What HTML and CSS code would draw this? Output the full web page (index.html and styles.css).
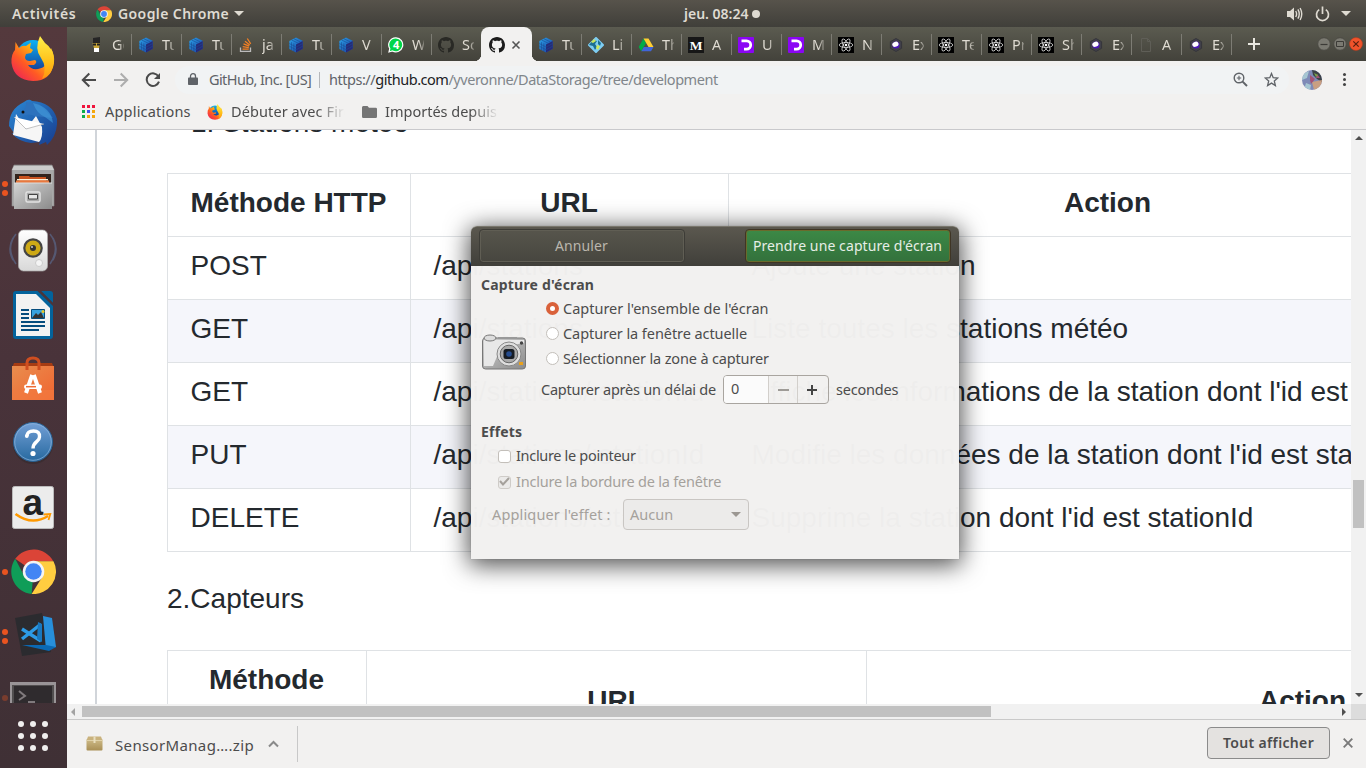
FILE: index.html
```html
<!DOCTYPE html>
<html lang="fr">
<head>
<meta charset="utf-8">
<title>Bureau</title>
<link rel="stylesheet" href="styles.css">
</head>
<body>
<svg class="defs" width="0" height="0">
  <defs>
    <linearGradient id="g-cube" x1="0" y1="0" x2="1" y2="1"><stop offset="0" stop-color="#2ba4e8"/><stop offset="1" stop-color="#173ba0"/></linearGradient>
    <linearGradient id="g-fox" x1="1" y1="0" x2="0" y2="1"><stop offset="0" stop-color="#ffe226"/><stop offset=".35" stop-color="#ffb011"/><stop offset=".62" stop-color="#ff5a24"/><stop offset="1" stop-color="#e91466"/></linearGradient>
    <linearGradient id="g-foxy" x1="0" y1="0" x2="0" y2="1"><stop offset="0" stop-color="#fff04a"/><stop offset=".6" stop-color="#ffc01a"/><stop offset="1" stop-color="#ff9410"/></linearGradient>
    <linearGradient id="g-globe" x1="0" y1="0" x2="0" y2="1"><stop offset="0" stop-color="#0bb2f4"/><stop offset="1" stop-color="#17338f"/></linearGradient>
    <linearGradient id="g-bird" x1="0" y1="0" x2="1" y2="1"><stop offset="0" stop-color="#2c8ad6"/><stop offset="1" stop-color="#173c8e"/></linearGradient>
    <linearGradient id="g-steel" x1="0" y1="0" x2="1" y2="1"><stop offset="0" stop-color="#d2d2d2"/><stop offset="1" stop-color="#8b8b8b"/></linearGradient>
    <linearGradient id="g-white" x1="0" y1="0" x2="0" y2="1"><stop offset="0" stop-color="#fff"/><stop offset="1" stop-color="#d8d8d8"/></linearGradient>
    <linearGradient id="g-bag" x1="0" y1="0" x2="1" y2="1"><stop offset="0" stop-color="#e98d4e"/><stop offset="1" stop-color="#f06530"/></linearGradient>
    <linearGradient id="g-help" x1="0" y1="0" x2="0" y2="1"><stop offset="0" stop-color="#739fd6"/><stop offset="1" stop-color="#26699f"/></linearGradient>
    <linearGradient id="g-box" x1="0" y1="0" x2="0" y2="1"><stop offset="0" stop-color="#cfbc8a"/><stop offset="1" stop-color="#a98f55"/></linearGradient>
  </defs>
  <symbol id="chrome" viewBox="0 0 48 48">
    <path fill="#db4437" d="M24 24 4.500 10.500A24 24 0 0 1 45 13H24Z"/>
    <path fill="#0f9d58" d="M24 24 22 48A24 24 0 0 1 4.500 10.500L14.500 29.500Z"/>
    <path fill="#ffcd40" d="M24 24V13H45.300A24 24 0 0 1 22 48L33.500 29.500Z"/>
    <circle cx="24" cy="24" r="11.500" fill="#f4f4f4"/><circle cx="24" cy="24" r="8.800" fill="#4285f4"/>
  </symbol>
  <symbol id="firefox" viewBox="0 0 44 46">
    <circle cx="22" cy="21" r="17" fill="url(#g-globe)"/>
    <path fill="url(#g-fox)" d="M4.500 6 8 12Q11 9 15 10L20 6.500 19 12 22 14 20 17 15 18 14 21Q14 25 19 25L24 24Q27 26 23 29L17 29Q20 34 27 33Q38 31 37 19L40 12Q44 20 43 27Q40 45 22 45Q3 44 .5 27Q0 18 4 14Z"/>
    <path fill="url(#g-foxy)" d="M29 0 34 7Q43 13 43 25Q42 39 31 43Q37 32 30 22Q23 13 29 0Z"/>
  </symbol>
  <symbol id="cube" viewBox="0 0 16 16">
    <path fill="url(#g-cube)" d="M8 .5 14.700 3.800V11.800L8 15.500 1.300 12V4Z"/>
    <path fill="#262a78" d="M8 7.500 14.700 4V11.800L8 15.500Z"/>
    <path fill="none" stroke="#1a4b94" stroke-width=".6" d="M1.300 6.500 8 10 14.700 6.500M1.300 9.200 8 12.700 14.700 9.200M3.500 5.200V13M5.800 6.400V14.200M3.500 2.900 10.300 6.300M5.800 1.700 12.500 5"/>
  </symbol>
  <symbol id="so" viewBox="0 0 16 16"><path fill="none" stroke="#bcbbbb" stroke-width="1.300" d="M2.500 10.500V14.400H12.500V10.500"/><path stroke="#f48024" stroke-width="1.300" d="M4.500 12.200H10.700M4.700 9.700 10.800 10.600M5.500 6.900 11.200 9.200M7 4.200 11.700 8M9.300 1.500 12.700 6.800"/></symbol>
  <symbol id="octocat" viewBox="0 0 16 16"><path d="M8 0C3.580 0 0 3.580 0 8c0 3.540 2.290 6.530 5.470 7.590.4.070.55-.17.55-.38 0-.19-.01-.82-.01-1.490-2.010.37-2.530-.49-2.690-.94-.09-.23-.48-.94-.82-1.130-.28-.15-.68-.52-.01-.53.63-.01 1.080.58 1.230.82.72 1.210 1.870.87 2.330.66.07-.52.28-.87.51-1.070-1.780-.2-3.640-.89-3.640-3.950 0-.87.31-1.590.82-2.150-.08-.2-.36-1.020.08-2.120 0 0 .67-.21 2.200.82.64-.18 1.320-.27 2-.27s1.360.09 2 .27c1.530-1.040 2.200-.82 2.200-.82.44 1.100.16 1.920.08 2.120.51.56.82 1.270.82 2.150 0 3.070-1.870 3.750-3.650 3.950.29.25.54.73.54 1.480 0 1.070-.01 1.930-.01 2.200 0 .21.15.46.55.38A8.010 8.010 0 0 0 16 8c0-4.420-3.580-8-8-8Z"/></symbol>
  <symbol id="react" viewBox="0 0 16 16"><path fill="#000" d="M0 0H16V16H0Z"/><g fill="none" stroke="#ddd" stroke-width=".8"><ellipse cx="8" cy="8" rx="6.800" ry="2.500"/><ellipse cx="8" cy="8" rx="6.800" ry="2.500" transform="rotate(60 8 8)"/><ellipse cx="8" cy="8" rx="6.800" ry="2.500" transform="rotate(120 8 8)"/></g><circle cx="8" cy="8" r="1.300" fill="#fff"/></symbol>
  <symbol id="expo" viewBox="0 0 16 16"><path fill="#41404a" stroke="#35353b" d="M8 1.500 13.600 4.700V11.300L8 14.500 2.400 11.300V4.700Z"/><circle cx="8" cy="8" r="3.600" fill="#4b16b8"/><ellipse cx="7.700" cy="7.100" rx="3.200" ry="2.500" fill="#fff" transform="rotate(-20 8 8)"/></symbol>
  <symbol id="dlogo" viewBox="0 0 16 16"><rect width="16" height="16" rx="1" fill="#8a05f4"/><path fill="none" stroke="#fff" stroke-width="2.800" d="M3.500 3.800H8.500A4 4 0 0 1 8.500 12.200H6"/></symbol>
</svg>

<div class="desktop">
  <header class="topbar">
    <span class="activities">Activités</span>
    <span class="appmenu"><svg width="16" height="16"><use href="#chrome"/></svg><span class="appname">Google Chrome</span><i class="caret"></i></span>
    <span class="clock">jeu. 08:24<i class="dot"></i></span>
    <span class="tray">
      <svg width="17" height="16" viewBox="0 0 17 16"><path fill="#dfdbd2" d="M1 5H4L8 1.500V14.500L4 11H1Z"/><g fill="none" stroke="#dfdbd2" stroke-width="1.400"><path d="M9.700 5Q11.500 8 9.700 11M11.900 3.300Q14.600 8 11.900 12.700M14.100 2Q17.400 8 14.100 14"/></g></svg>
      <svg class="power" width="15" height="16" viewBox="0 0 15 16"><path fill="none" stroke="#dfdbd2" stroke-width="1.700" d="M4.200 3.600A6 6 0 1 0 10.800 3.600M7.500 .5V8"/></svg>
      <i class="caret"></i>
    </span>
  </header>

  <div class="workspace">
    <nav class="dock">
      <div class="slot"><svg width="44" height="46"><use href="#firefox"/></svg></div>
      <div class="slot"><svg width="48" height="48" viewBox="0 0 48 48"><path fill="url(#g-bird)" d="M15 3Q20-1 23 2Q43 3 48 20Q49 36 38 46L37 43 30 46 31 43 22 44Q8 42 3 34L5 34 0 27Q0 10 15 3Z"/><path fill="#f6f6f6" d="M7 15 4 36 30 43Q34 39 33 28L27 17 17 30Z"/><path fill="#fff" stroke="#aaa" stroke-width=".7" d="M5 18 17 30 35 25"/><path fill="#2d72bd" d="M12 16Q18 9 17 3L30 5 44 19 26 17Q18 13 10 19Z"/><path fill="#439cdc" opacity=".6" d="M24 4Q42 8 44 24L36 18Q28 15 24 4Z"/><circle cx="14" cy="13" r="1.500" fill="#111"/></svg></div>
      <div class="slot"><i class="run two"></i><svg width="44" height="46" viewBox="0 0 44 46"><path fill="#a8a8a8" stroke="#8d8d8d" stroke-width=".6" d="M3 1H41L43 6V42H1V6Z"/><path fill="#cbcbcb" d="M3 2H41L43 6H1Z"/><path fill="#33241d" d="M4 10H40V20H4Z"/><path fill="#c9531f" d="M8 12H18L19 13H35V19H8Z"/><path fill="#fff2d8" d="M6 15H37V16.500H6Z"/><path fill="#e8783e" d="M5 16.500H38V19H5Z"/><path fill="url(#g-steel)" d="M3 19H41V45H3Z"/><path stroke="#ddd" d="M3 19H41"/><rect x="15" y="28" width="14" height="10" rx="1.500" fill="#aaa" stroke="#e2e2e2" stroke-width="1.500"/><path fill="#e7e7e7" stroke="#444" d="M17.500 30.500H26.500V35H17.500Z"/></svg></div>
      <div class="slot"><svg width="48" height="46" viewBox="0 0 48 46"><g fill="none" stroke="#5b6c91" stroke-width="1.600" opacity=".65"><path d="M7 6Q-4 20 7 36M41 6Q52 20 41 36M4 10Q-2 21 4 32M44 10Q50 21 44 32"/></g><rect x="9.500" y="2" width="29" height="41" rx="5" fill="url(#g-white)" stroke="#aaa" stroke-width=".7"/><circle cx="24" cy="20" r="9.800" fill="#444"/><circle cx="24" cy="20" r="7.600" fill="#cda916"/><circle cx="24" cy="20" r="3" fill="#333"/><circle cx="23" cy="19" r="1" fill="#ccc"/><circle cx="30" cy="35" r="3.500" fill="#f4f4f4" stroke="#ccc"/></svg></div>
      <div class="slot"><svg width="40" height="48" viewBox="0 0 40 48"><path fill="#03639c" d="M3 0H26L40 14V45Q40 48 37 48H3Q0 48 0 45V3Q0 0 3 0Z"/><path fill="#03639c" d="M28 0H37Q40 0 40 3V12Z"/><path fill="#4b343a" d="M24.500 0H28L40 12V15Z"/><path fill="#f2f2f2" d="M3 3H23L37 17V45H3Z"/><path stroke="#054c7d" stroke-width="2" d="M8 19H16M8 23H16M8 27H16M8 31H32M8 35H32M8 39H26"/><path fill="#37a2df" stroke="#054c7d" d="M18.500 18.500H31.500V27.500H18.500Z"/><path fill="#333" d="M19 27 23 22 25 24 28 21 31 27Z"/><circle cx="30" cy="20.500" r="1.500" fill="#e9c826"/></svg></div>
      <div class="slot"><svg width="42" height="46" viewBox="0 0 42 46"><path fill="#a63c13" d="M2 7H40L42 12H0Z"/><path fill="url(#g-bag)" d="M0 10H42V44H0Z"/><path fill="#f47b41" opacity=".6" d="M0 34H42V44H0Z"/><path fill="none" stroke="#cf4e20" stroke-width="3" d="M15 14V7Q15 2 21 2T27 7V14"/><path fill="none" stroke="#fff" stroke-width="4" d="M14 37 20.200 19M21.800 19 28 37"/><rect x="12" y="28.500" width="18" height="4.400" rx="2.200" fill="#fff"/><path stroke="#ef6b33" stroke-width="1.500" d="M14 30.700H24"/></svg></div>
      <div class="slot"><svg width="42" height="44" viewBox="0 0 42 44"><circle cx="21" cy="23" r="20" fill="#2b2529" opacity=".4"/><circle cx="21" cy="21" r="19.500" fill="url(#g-help)" stroke="#2a6192"/><circle cx="21" cy="21" r="18.300" fill="none" stroke="#8fb4dc" stroke-width=".7"/><path fill="none" stroke="#fff" stroke-width="3.400" d="M15 15Q15 10 21.500 10T27.500 16C27.500 21 21 20.500 21 27.500"/><circle cx="14.800" cy="15" r="1.900" fill="#fff"/><circle cx="21" cy="32.500" r="2.600" fill="#fff"/></svg></div>
      <div class="slot"><svg width="42" height="43" viewBox="0 0 42 43"><rect x=".5" y=".5" width="41" height="42" rx="2" fill="#ececec" stroke="#bbb"/><text x="10.500" y="28.500" class="amazon">a</text><path fill="none" stroke="#ff9900" stroke-width="2.600" d="M3.500 28Q20 40 36 30"/><path fill="none" stroke="#ff9900" stroke-width="1.800" d="M31.500 28.500 38.300 28 36.500 34"/></svg></div>
      <div class="slot"><i class="run"></i><svg width="45" height="45"><use href="#chrome"/></svg></div>
      <div class="slot"><i class="run two"></i><svg class="code" width="42" height="46" viewBox="0 0 42 46"><path fill="#2b2b2f" d="M0 6 27 1 36 40 7 44Z"/><path fill="#278fdb" d="M28 4 37 6 41 35 31 38Z"/><path fill="#0b69b4" d="M7 33 31 33 41 35 34 39Z"/><path fill="none" stroke="#2d9be6" stroke-width="3.400" d="M7 17 26 29M7 27 26 12"/><path fill="#1978bf" d="M23 10 27 12V30L22 27Z"/></svg></div>
      <div class="slot last"><i class="run dim"></i><svg width="46" height="21" viewBox="0 0 46 21"><path fill="#a9a6a8" d="M0 0H46V21H0Z"/><path fill="#555" d="M2 3H44V21H2Z"/><path fill="#2d2b2d" d="M4 4H42V21H4Z"/><path fill="none" stroke="#8b878a" stroke-width="2" d="M9 9 15 14 9 18M18 20H25"/></svg></div>
      <div class="apps"><i></i><i></i><i></i><i></i><i></i><i></i><i></i><i></i><i></i></div>
    </nav>

    <main class="browser">
      <div class="tabs">
        <div class="tab"><svg viewBox="0 0 16 16"><path fill="#252525" d="M5 1 12 0V6H5Z"/><path fill="#c9a637" d="M4.500 6H12L11 11H6Z"/><path fill="#222" d="M5 6.500H8V8.500H5ZM9 6.500H12V8.500H9Z"/><path fill="#fff" d="M6 11H11V15H6Z"/></svg><b>Go</b></div>
        <div class="tab"><svg><use href="#cube"/></svg><b>Tu</b></div>
        <div class="tab"><svg><use href="#cube"/></svg><b>Tu</b></div>
        <div class="tab"><svg><use href="#so"/></svg><b>ja</b></div>
        <div class="tab"><svg><use href="#cube"/></svg><b>Tu</b></div>
        <div class="tab"><svg><use href="#cube"/></svg><b>V</b></div>
        <div class="tab"><svg viewBox="0 0 16 16"><path fill="#00d649" stroke="#fff" stroke-width="1.200" d="M8 .8A7 7 0 1 1 4.500 14L1 15 1.800 11.500A7 7 0 0 1 8 .8Z"/><text x="4.900" y="12" class="badge">4</text></svg><b>W</b></div>
        <div class="tab"><svg class="dark"><use href="#octocat"/></svg><b>Sc</b></div>
        <div class="tab active"><svg class="ink"><use href="#octocat"/></svg><svg class="x" viewBox="0 0 10 10"><path d="M1.500 1.500 8.500 8.500M8.500 1.500 1.500 8.500"/></svg></div>
        <div class="tab"><svg><use href="#cube"/></svg><b>Tu</b></div>
        <div class="tab"><svg viewBox="0 0 16 16"><path fill="#7ecdf2" stroke="#7ecdf2" stroke-width="2" stroke-linejoin="round" d="M8 1 15 8 8 15 1 8Z"/><path fill="#1c6f92" d="M5 3 9 4 7 7 9 10 7 13 5 9 1 8ZM10 3 13 6 12 9 10 7Z"/><path fill="#cde85e" d="M6 2 8 4 5 6 3 5ZM9 8 12 9 10 13 8 11Z"/></svg><b>Li</b></div>
        <div class="tab"><svg viewBox="0 0 16 16"><path fill="#00ac47" d="M5.500 1.500 8 6 3.300 14.300.7 10Z"/><path fill="#ffcf33" d="M5.500 1.500H10.500L15.500 10H10.500Z"/><path fill="#4065d9" d="M5.800 10H15.500L13 14.300H3.300Z"/></svg><b>Th</b></div>
        <div class="tab"><svg viewBox="0 0 16 16"><path fill="#171717" d="M0 0H16V16H0Z"/><text x="1.800" y="12.800" class="medium">M</text></svg><b>A</b></div>
        <div class="tab"><svg><use href="#dlogo"/></svg><b>U</b></div>
        <div class="tab"><svg><use href="#dlogo"/></svg><b>M</b></div>
        <div class="tab"><svg><use href="#react"/></svg><b>N</b></div>
        <div class="tab"><svg><use href="#expo"/></svg><b>Ex</b></div>
        <div class="tab"><svg><use href="#react"/></svg><b>Te</b></div>
        <div class="tab"><svg><use href="#react"/></svg><b>Pr</b></div>
        <div class="tab"><svg><use href="#react"/></svg><b>Sh</b></div>
        <div class="tab"><svg><use href="#expo"/></svg><b>Ex</b></div>
        <div class="tab"><svg viewBox="0 0 16 16"><path fill="none" stroke="#5f5e57" d="M3.500 1.500H9.500L12.500 4.500V14.500H3.500ZM9.500 1.500V4.500H12.500"/></svg><b>A</b></div>
        <div class="tab"><svg><use href="#expo"/></svg><b>Ex</b></div>
        <svg class="plus" width="12" height="12" viewBox="0 0 12 12"><path stroke="#e9e7e0" stroke-width="2" d="M6 0V12M0 6H12"/></svg>
        <div class="winbtns">
          <svg viewBox="0 0 14 14"><circle cx="7" cy="7" r="6.300" fill="#7b7a72" stroke="#4b4a43"/><path stroke="#3c3b37" stroke-width="1.200" d="M3.500 7.500H10.500"/></svg>
          <svg viewBox="0 0 14 14"><circle cx="7" cy="7" r="6.300" fill="#7b7a72" stroke="#4b4a43"/><path fill="none" stroke="#3c3b37" d="M3.500 4.500H10.500V9.500H3.500Z"/></svg>
          <svg viewBox="0 0 14 14"><circle cx="7" cy="7" r="6.500" fill="#f0532b" stroke="#b63b1c" stroke-width=".5"/><path stroke="#59200f" stroke-width="1.200" d="M4.300 4.300 9.700 9.700M9.700 4.300 4.300 9.700"/></svg>
        </div>
      </div>

      <div class="toolbar">
        <svg class="back" width="16" height="16" viewBox="0 0 16 16"><path d="M15 8H2M8.300 1.500 1.800 8 8.300 14.500"/></svg>
        <svg class="fwd" width="16" height="16" viewBox="0 0 16 16"><path d="M1 8H14M7.700 1.500 14.200 8 7.700 14.500"/></svg>
        <svg class="reload" width="16" height="16" viewBox="0 0 16 16"><path d="M13.500 4.500A6.300 6.300 0 1 0 14 9.700"/><path fill="#4a4a4a" stroke="none" d="M15 1V7H9Z"/></svg>
        <div class="omnibox">
          <svg class="lock" width="10" height="13" viewBox="0 0 10 13"><path fill="#5f6368" d="M.8 4.500H9.200Q10 4.500 10 5.300V11Q10 12 9.200 12H.8Q0 12 0 11V5.300Q0 4.500.8 4.500Z"/><path fill="none" stroke="#5f6368" stroke-width="1.300" d="M2.500 5V3.200A2.500 2.500 0 0 1 7.500 3.200V5"/></svg>
          <span class="org">GitHub, Inc. [US]</span><i class="bar"></i>
          <span class="url"><span class="scheme">https://</span><span class="host">github.com</span><span class="path">/yveronne/DataStorage/tree/development</span></span>
          <svg class="mag" width="15" height="15" viewBox="0 0 15 15"><g fill="none" stroke="#5f6368" stroke-width="1.400"><circle cx="6" cy="6" r="4.800"/><path d="M9.600 9.600 14 14" stroke-width="2"/><path d="M6 3.800V8.200M3.800 6H8.200" stroke-width="1.100"/></g></svg>
          <svg class="star" width="15" height="15" viewBox="0 0 15 15"><path fill="none" stroke="#5f6368" stroke-width="1.300" d="M7.500 1.500 9.200 5.700 13.800 6 10.300 9 11.400 13.500 7.500 11.100 3.600 13.500 4.700 9 1.200 6 5.800 5.700Z"/></svg>
        </div>
        <svg class="avatar" width="20" height="20" viewBox="0 0 20 20"><clipPath id="av"><circle cx="10" cy="10" r="10"/></clipPath><g clip-path="url(#av)"><path fill="#7f8ab7" d="M0 0H20V20H0Z"/><path fill="#3c4248" d="M10 0H20V12L15 9 11 5Z"/><path fill="#c99f82" d="M10 12 20 10V20H12Z"/><path fill="#a6c6d2" d="M0 4 7 1 5 8 0 10ZM4 13 9 15 8 20H2Z"/><path fill="#a35276" d="M8 5 13 9 9 14 8 10ZM15 4 18 8 14 8Z"/><path fill="#7ba748" d="M12 3 16 5 14 7Z"/></g></svg>
        <i class="kebab"></i>
      </div>

      <div class="bookmarks">
        <svg class="grid" width="14" height="14" viewBox="0 0 14 14"><path fill="#f0143c" d="M0 0H3V3H0ZM5 0H8V3H5ZM10 0H13V3H10Z"/><path fill="#0cad4b" d="M0 5H3V8H0ZM0 10H3V13H0Z"/><path fill="#3f51f0" d="M5 5H8V8H5Z"/><path fill="#f4a70b" d="M10 5H13V8H10ZM5 10H8V13H5ZM10 10H13V13H10Z"/></svg>
        <span class="bm apps-label">Applications</span>
        <svg class="ff" width="16" height="16"><use href="#firefox"/></svg>
        <span class="bm fade debut">Débuter avec Firefox</span>
        <svg class="folder" width="15" height="12" viewBox="0 0 15 12"><path fill="#757575" d="M1.300 0H5.500L7 1.700H13.700Q15 1.700 15 3V10.500Q15 12 13.700 12H1.300Q0 12 0 10.500V1.500Q0 0 1.300 0Z"/></svg>
        <span class="bm fade import">Importés depuis Firefox</span>
      </div>

      <div class="view">
        <div class="page">
          <p class="item">1. Stations météo</p>
          <table class="api first">
            <colgroup><col class="a1"><col class="a2"><col class="a3"></colgroup>
            <tr><th>Méthode HTTP</th><th>URL</th><th>Action</th></tr>
            <tr><td>POST</td><td>/api/stations</td><td>Ajoute une station</td></tr>
            <tr><td>GET</td><td>/api/stations</td><td>Liste toutes les stations météo</td></tr>
            <tr><td>GET</td><td>/api/stations/:stationId</td><td>Affiche les informations de la station dont l'id est stationId</td></tr>
            <tr><td>PUT</td><td>/api/stations/:stationId</td><td>Modifie les données de la station dont l'id est stationId</td></tr>
            <tr><td>DELETE</td><td>/api/stations/:stationId</td><td>Supprime la station dont l'id est stationId</td></tr>
          </table>
          <p class="next">2.Capteurs</p>
          <table class="api second">
            <colgroup><col class="b1"><col class="b2"><col class="b3"></colgroup>
            <tr><th>Méthode HTTP</th><th>URL</th><th>Action</th></tr>
          </table>
        </div>
        <div class="vscroll"><i class="up"></i><i class="thumb"></i><i class="down"></i></div>
        <div class="hscroll"><i class="left"></i><i class="thumb"></i><i class="right"></i></div>
        <div class="corner"></div>
      </div>

      <footer class="downloads">
        <svg class="zip" width="17" height="15" viewBox="0 0 17 15"><rect x=".5" y="3" width="16" height="11.500" rx="1" fill="url(#g-box)"/><path fill="#c9b27d" d="M2 .5H15L16.500 4.500H.5Z"/><path fill="#e9dfc0" d="M7.500 .5H9.500V7H7.500Z"/><path stroke="#eadfbc" stroke-width=".7" d="M.5 4.500H16.500"/></svg>
        <span class="fname">SensorManag….zip</span>
        <svg class="chev" width="11" height="8" viewBox="0 0 11 8"><path fill="none" stroke="#8a8a8a" stroke-width="2" d="M1 6.500 5.500 2 10 6.500"/></svg>
        <i class="rule"></i>
        <button class="showall">Tout afficher</button>
        <svg class="close" width="10" height="10" viewBox="0 0 10 10"><path stroke="#7a7a7a" stroke-width="1.900" d="M.7.7 9.300 9.300M9.300.7.7 9.300"/></svg>
      </footer>
    </main>
  </div>
</div>

<section class="dialog">
  <header class="dhead"><button class="cancel">Annuler</button><button class="take">Prendre une capture d'écran</button></header>
  <div class="dbody">
    <h2 class="cap">Capture d'écran</h2>
    <div class="capture">
      <svg class="camera" width="46" height="36" viewBox="0 0 46 36"><rect x="1.500" y="4" width="43" height="31" rx="3" fill="url(#g-steel)" stroke="#777"/><path fill="#e8e8e8" d="M3 6H43V9L20 13 12 32H3Z"/><ellipse cx="9" cy="4" rx="6" ry="3" fill="#ddd" stroke="#777"/><path fill="#999" d="M17 3H36V5H17Z"/><circle cx="28" cy="20" r="12" fill="#dedede" stroke="#888"/><circle cx="28" cy="20" r="8.800" fill="#aaa" stroke="#666"/><rect x="22.500" y="15" width="11" height="10" rx="2.500" fill="#171c23"/><circle cx="28" cy="20" r="2.800" fill="#254c8f"/><circle cx="40.500" cy="9" r="1.700" fill="#444"/><path fill="#e9a11b" d="M38 28H42V31H38Z"/></svg>
      <div class="radios">
        <label><i class="radio on"></i><span class="t1">Capturer l'ensemble de l'écran</span></label>
        <label><i class="radio"></i><span class="t2">Capturer la fenêtre actuelle</span></label>
        <label><i class="radio"></i><span class="t3">Sélectionner la zone à capturer</span></label>
      </div>
    </div>
    <div class="delay"><span class="t4">Capturer après un délai de</span><div class="spin"><span class="value">0</span><span class="minus"></span><span class="plusb"></span></div><span class="t5">secondes</span></div>
    <h2 class="fx">Effets</h2>
    <label class="check"><i class="box"></i><span class="t6">Inclure le pointeur</span></label>
    <label class="check off"><i class="box"><svg width="11" height="9" viewBox="0 0 11 9"><path fill="none" stroke="#a5a19c" stroke-width="2" d="M1 4 4 7.500 10 1"/></svg></i><span class="t7">Inclure la bordure de la fenêtre</span></label>
    <div class="effect"><span class="t8">Appliquer l'effet :</span><div class="combo"><span class="t9">Aucun</span><i class="caret"></i></div></div>
  </div>
</section>
</body>
</html>
```
FILE: styles.css
```css
* { box-sizing: border-box; }
body { margin: 0; width: 1366px; height: 768px; overflow: hidden; font-family: "Noto Sans", "Open Sans", sans-serif; font-size: 14.500px; color: #4c4c4c; }
svg { display: block; flex: none; }
i { display: block; flex: none; }
span { white-space: nowrap; }
.defs { position: absolute; }
.desktop { display: flex; flex-direction: column; height: 768px; }
.caret { width: 0; height: 0; border: 5px solid transparent; border-top-color: #dfdbd2; border-bottom: 0; }

.topbar { height: 27px; flex: none; display: grid; grid-template-columns: 96px 588px 1fr auto; align-items: center; background: linear-gradient(#57534b, #403f3a); color: #dfdbd2; font-weight: 600; font-size: 14px; }
.activities { padding-left: 12px; letter-spacing: .65px; }
.appmenu { display: flex; align-items: center; }
.appname { margin-left: 6px; width: 112px; letter-spacing: .4px; }
.appmenu .caret { margin-left: 4px; }
.clock { display: flex; align-items: center; }
.dot { width: 8px; height: 8px; border-radius: 50%; background: #dfdbd2; margin-left: 4px; }
.tray { display: flex; align-items: center; padding-right: 15px; }
.power { margin: 0 11px 0 12px; }

.workspace { display: flex; flex: 1; min-height: 0; }
.dock { width: 67px; flex: none; background: linear-gradient(#54393d, #49333a 45%, #3f3035); display: flex; flex-direction: column; position: relative; overflow: hidden; }
.slot { height: 64px; flex: none; display: flex; align-items: center; justify-content: center; position: relative; padding-right: 1px; }
.slot .code { margin: 0 -5px 0 0; }
.slot.last { height: 36px; align-items: flex-start; padding-top: 15px; opacity: .85; }
.run { position: absolute; left: 2px; top: 30px; width: 6px; height: 6px; border-radius: 50%; background: #e95420; }
.run.two { top: 26px; box-shadow: 0 9px #e95420; }
.run.dim { top: 28px; opacity: .4; }
.apps { display: grid; grid-template-columns: repeat(3, 6px); gap: 6px; margin: 18px 0 0 18px; }
.apps i { width: 6px; height: 6px; border-radius: 50%; background: #f0efee; }

.browser { flex: 1; min-width: 0; display: flex; flex-direction: column; }
.tabs { height: 34px; flex: none; display: flex; align-items: center; padding-left: 14px; background: linear-gradient(#5b5b50, #43423b); }
.tab { width: 50px; flex: none; height: 34px; display: flex; align-items: center; padding: 0 0 0 7px; position: relative; }
.tab svg { width: 16px; height: 16px; margin-top: 1px; }
.tab.active { padding-left: 8px; }
.tab b { font-weight: 400; color: #dfdbd2; margin: 0 0 1px 8px; width: 12px; overflow: hidden; white-space: nowrap; -webkit-mask-image: linear-gradient(90deg, #000 55%, rgba(0,0,0,.3)); }
.tab::after { content: ""; position: absolute; right: -1px; top: 7px; width: 1px; height: 21px; background: #7d7c74; }
.tab:nth-child(8)::after { display: none; }
.tab.active { background: #f2f1f0; border-radius: 8px 8px 0 0; width: 51px; margin-right: -1px; }
.tab.active::before { content: ""; position: absolute; left: -7px; bottom: 0; width: 7px; height: 7px; background: radial-gradient(circle at 0 0, transparent 7px, #f2f1f0 7.500px); }
.tab.active::after { width: 7px; height: 7px; right: -7px; top: auto; bottom: 0; background: radial-gradient(circle at 100% 0, transparent 7px, #f2f1f0 7.500px); }
.dark { fill: #292925; }
.ink { fill: #1c1c1c; }
.tab .x { width: 10px; height: 10px; margin-left: 6px; fill: none; stroke: #555; stroke-width: 1.600; }
.badge { font: 700 11px "Noto Sans", sans-serif; fill: #fff; }
.medium { font: 700 13.500px "Liberation Serif", serif; fill: #fff; }
.amazon { font: 700 37px "Liberation Sans", sans-serif; fill: #222; }
.plus { margin-left: 17px; }
.winbtns { display: flex; gap: 2px; margin-left: 57px; }
.winbtns svg { width: 14px; height: 14px; }

.toolbar { height: 37px; flex: none; background: #f2f1f0; display: flex; align-items: center; padding-left: 14px; }
.back, .fwd, .reload { fill: none; stroke: #4a4a4a; stroke-width: 2; margin-right: 16px; }
.fwd { stroke: #adadad; }
.reload { margin-right: 14px; }
.omnibox { width: 1114px; height: 28px; border-radius: 14px; background: #f1f3f4; display: flex; align-items: center; padding-left: 13px; color: #5f6368; }
.org { margin: 0 0 2px 11px; width: 103px; letter-spacing: -.6px; }
.bar { width: 1px; height: 16px; background: #b5b7ba; margin: 0 9px 0 7px; }
.url { width: 389px; letter-spacing: -.47px; margin-bottom: 2px; }
.host { color: #202124; }
.path { color: #80868b; }
.mag { margin-left: 515px; }
.star { margin-left: 16px; }
.avatar { margin-left: 13px; }
.kebab { width: 3px; height: 3px; border-radius: 50%; background: #444; box-shadow: 0 -5px #444, 0 5px #444; margin-left: 21px; }

.bookmarks { height: 32px; flex: none; background: #f2f1f0; border-bottom: 1px solid #c9c9cc; display: flex; align-items: center; padding: 0 0 4px 15px; }
.bm { overflow: hidden; margin-bottom: 1px; }
.apps-label { margin-left: 9px; width: 87px; letter-spacing: .2px; }
.ff { margin-left: 15px; }
.debut { margin-left: 8px; width: 114px; letter-spacing: .1px; }
.fade { -webkit-mask-image: linear-gradient(90deg, #000 75%, transparent); }
.folder { margin-left: 17px; }
.import { margin-left: 8px; width: 114px; }

.view { height: 589px; flex: none; display: grid; grid-template: 574px 15px / 1284px 15px; background: #fff; }
.page { overflow: hidden; margin-left: 28px; border-left: 2px solid #d1d5da; padding-left: 70px; font: 28px/42px "Liberation Sans", Arial, sans-serif; color: #24292e; }
.page p { margin: 0; white-space: nowrap; }
.page .item { margin: -28px 0 29px 24px; }
.api { border-collapse: collapse; table-layout: fixed; }
.first { width: 1320px; }
.second { width: 1572px; }
.a1 { width: 243px; } .a2 { width: 318px; } .a3 { width: 759px; }
.b1 { width: 199px; } .b2 { width: 500px; } .b3 { width: 873px; }
.api th, .api td { border: 1px solid #dfe2e5; padding: 8px 23.500px 12px 22.500px; white-space: nowrap; text-align: left; }
.api th { text-align: center; }
.second th { white-space: normal; }
.api tr:nth-child(odd) td { background: #f5f6fb; }
.page .next { margin: 26px 0 30px; }

.vscroll, .hscroll { background: #f1f1f1; display: flex; align-items: center; }
.vscroll { flex-direction: column; }
.vscroll .thumb { width: 11px; height: 48px; background: #c1c1c1; margin: 340px 0 165px; }
.vscroll .up { margin-top: 6px; border: 4px solid transparent; border-bottom-color: #505050; border-top: 0; }
.vscroll .down { border: 4px solid transparent; border-top-color: #505050; border-bottom: 0; }
.hscroll .left { margin: 0 7px 0 4px; border: 4px solid transparent; border-right-color: #a3a3a3; border-left: 0; }
.hscroll .thumb { width: 909px; height: 11px; background: #c1c1c1; }
.hscroll .right { margin-left: 351px; border: 4px solid transparent; border-left-color: #505050; border-right: 0; }
.corner { background: #dcdcdc; }

.downloads { flex: 1; border-top: 1px solid #c9c9c9; background: #f2f1f0; display: flex; align-items: center; padding-left: 19px; }
.zip { margin-bottom: 2px; }
.fname { margin: 1px 0 0 12px; width: 141px; font-size: 15px; letter-spacing: .35px; }
.chev { margin-left: 12px; }
.rule { width: 1px; height: 36px; background: #c8c8c8; margin: 0 909px 0 18px; }
.showall { width: 123px; height: 32px; border: 1px solid #8b8b8b; border-radius: 4px; background: #e4e2e0; font: 600 14px "Noto Sans", sans-serif; letter-spacing: .35px; color: #4c4c4c; padding: 0 0 2px; margin-bottom: 2px; }
.close { margin: 0 0 2px 13px; }

.dialog { position: absolute; left: 471px; top: 226px; width: 488px; height: 333px; border-radius: 6px 6px 0 0; background: rgba(242, 241, 240, .985); box-shadow: 0 0 1px rgba(0,0,0,.35), 0 4px 24px 2px rgba(0,0,0,.7); }
.dhead { height: 40px; border-radius: 6px 6px 0 0; background: linear-gradient(#5b584f, #403f3a); border-top: 1px solid #79766c; display: flex; justify-content: space-between; padding: 2px 8px 4px; }
.dhead button { font: 14px "Noto Sans", sans-serif; padding: 0 1px 2px 0; height: 34px; border-radius: 4px; letter-spacing: .1px; }
.cancel { width: 206px; background: linear-gradient(#57554c, #47463f); border: 1px solid #3d3c37; color: #bab6ad; box-shadow: inset 0 0 0 1px #605e54; }
.take { width: 206px; background: linear-gradient(#3c8946, #33713c); border: 1px solid #3f3525; color: #e6eee6; box-shadow: inset 0 0 0 1px #6a6a2c; }
.dbody { padding-left: 10px; }
.dbody label > span, .delay > span, .effect > span, .t9 { margin-bottom: 2px; }
.dbody h2 { margin: 0; font-size: 14px; line-height: 20px; font-weight: 700; letter-spacing: .2px; }
.cap { padding-top: 9px; }
.capture { display: flex; height: 75px; margin-top: 1px; }
.camera { margin: 38px 0 0; }
.radios { margin-left: 19px; }
.radios label { display: flex; align-items: center; height: 25px; gap: 4px; }
.radio { width: 13px; height: 13px; border-radius: 50%; background: #fff; border: 1px solid #c3bfba; }
.radio.on { border: 4px solid #d9613a; }
.delay { display: flex; align-items: center; height: 29px; margin: 4px 0 0 60px; }
.t2 { letter-spacing: -.07px; }
.t3 { letter-spacing: -.16px; }
.t4 { width: 175px; letter-spacing: -.23px; }
.t5 { letter-spacing: -.2px; }
.t6 { letter-spacing: -.32px; }
.t7 { letter-spacing: -.2px; }
.spin { width: 106px; height: 29px; margin: 0 7px; border: 1px solid #a9a5a0; border-radius: 4px; display: flex; overflow: hidden; }
.value { width: 44px; background: #fbfbfb; padding: 2px 0 0 7px; }
.minus, .plusb { width: 29px; border-left: 1px solid #d2cfcb; background: linear-gradient(#9e9b97, #9e9b97) center / 11px 2px no-repeat; }
.plusb { flex: 0 0 29px; background: linear-gradient(#444, #444) center / 10px 2px no-repeat, linear-gradient(#444, #444) center / 2px 10px no-repeat; }
.fx { padding-top: 18px; height: 38px; }
.check { display: flex; align-items: center; height: 26px; margin-left: 17px; gap: 5px; }
.fx + .check { margin-top: 1px; }
.box { width: 13px; height: 13px; border: 1px solid #c3bfba; border-radius: 3px; background: #fff; }
.off .box { background: #ebeae9; border-color: #cfccc8; }
.off, .effect { color: #a5a19c; }
.effect { display: flex; align-items: center; height: 31px; margin: 4px 0 0 11px; }
.t8 { width: 118px; letter-spacing: .15px; }
.combo { width: 126px; height: 31px; margin-left: 13px; border: 1px solid #c9c6c3; border-radius: 4px; background: #ecebea; display: flex; align-items: center; justify-content: space-between; padding: 0 7px 0 6px; }
.combo .caret { border-top-color: #9b9792; }
```
